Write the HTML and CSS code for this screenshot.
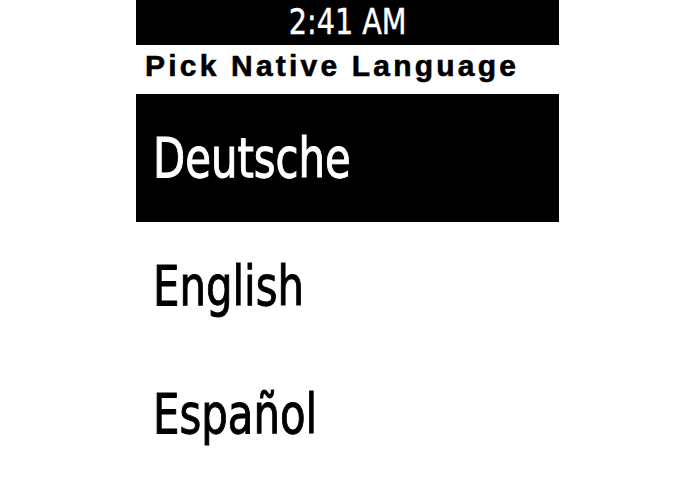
FILE: index.html
```html
<!DOCTYPE html>
<html>
<head>
<meta charset="utf-8">
<link rel="stylesheet" href="styles.css">
</head>
<body>
<div class="stage">
  <div class="screen">
    <div class="status"><span class="status-text">2:41 AM</span></div>
    <div class="header">Pick Native Language</div>
    <ul class="menu">
      <li class="item selected"><span class="label">Deutsche</span></li>
      <li class="item"><span class="label">English</span></li>
      <li class="item"><span class="label">Español</span></li>
    </ul>
  </div>
</div>
</body>
</html>
```
FILE: styles.css
```css
html, body {
  margin: 0;
  padding: 0;
  background: #fff;
}
.stage {
  width: 695px;
  height: 494px;
  display: flex;
  justify-content: center;
  overflow: hidden;
}
.screen {
  width: 423px;
  height: 494px;
  background: #fff;
  display: flex;
  flex-direction: column;
}
.status {
  height: 45px;
  background: #000;
  color: #fff;
  font-family: "DejaVu Sans Condensed", sans-serif;
  font-size: 35px;
  line-height: 45px;
  text-align: center;
}
.status-text {
  display: inline-block;
  transform: scaleX(0.91);
  transform-origin: center;
  -webkit-text-stroke: 0.4px #fff;
}
.header {
  height: 49px;
  color: #000;
  font-family: "Liberation Sans", Arial, sans-serif;
  font-weight: bold;
  font-size: 30px;
  line-height: 41px;
  letter-spacing: 3.2px;
  padding-left: 9px;
  white-space: nowrap;
  -webkit-text-stroke: 0.6px #000;
}
.menu {
  list-style: none;
  margin: 0;
  padding: 0;
}
.item {
  height: 128px;
  padding-left: 17px;
  font-family: "DejaVu Sans Condensed", sans-serif;
  font-size: 56px;
  line-height: 128px;
  color: #000;
  white-space: nowrap;
}
.label {
  display: inline-block;
  transform: scaleX(0.83);
  transform-origin: left center;
  -webkit-text-stroke: 1px #000;
}
.item.selected {
  background: #000;
  color: #fff;
}
.item.selected .label {
  -webkit-text-stroke: 1px #fff;
}
```
